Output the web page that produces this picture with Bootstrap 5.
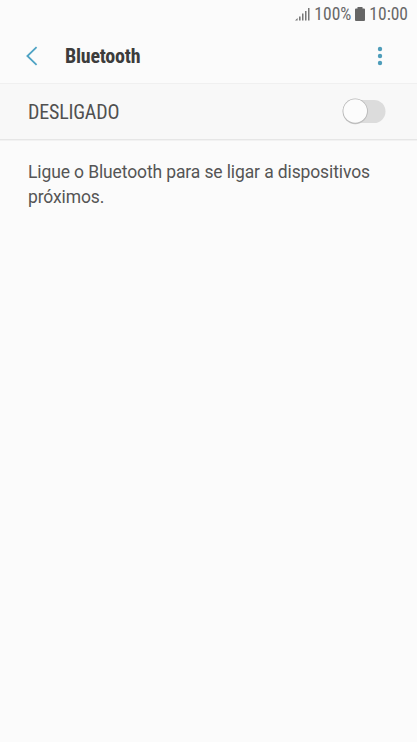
<!DOCTYPE html>
<html lang="pt">
<head>
<meta charset="utf-8">
<meta name="viewport" content="width=device-width, initial-scale=1">
<title>Bluetooth</title>
<link href="https://cdn.jsdelivr.net/npm/bootstrap@5.3.0/dist/css/bootstrap.min.css" rel="stylesheet">
<style>
body{background:#fbfbfb;font-family:Roboto,"Liberation Sans",sans-serif;color:#555;min-height:742px}
.cond{font-family:"Roboto Condensed",Roboto,sans-serif;font-stretch:75%}
.status-bar{height:28px;padding-right:9px;font-size:17.5px;line-height:28px;color:#686868}
.title-bar{height:56px;border-bottom:1px solid #f0f0f0;padding:0 33px 0 26px}
.screen-title{font-size:20px;line-height:24px;font-weight:700;letter-spacing:-.23px;color:#3c3c3c;margin-left:27px}
.switch-row{height:56px;background:#f8f8f8;border-bottom:1px solid #e6e6e6;box-shadow:0 1px 0 #f2f2f2;padding:0 30px 0 28px}
.switch-label{font-size:20px;line-height:24px;letter-spacing:-.2px;color:#505050;padding-top:1px}
.switch-control{margin-bottom:1px}
.hint{padding:20px 28px;font-size:17.5px;line-height:25px;letter-spacing:-.12px}
</style>
</head>
<body>
<div class="status-bar cond d-flex justify-content-end align-items-center">
  <svg width="15" height="15" viewBox="0 0 15 15" fill="#777" class="me-1"><path d="M0 13.5 2.6 11v2.5zM4 9.5h1.6v4H4zM7 6.5h1.5v7H7zM10 4h1.5v9.5H10zM13 1h1.5v12.5H13z"/></svg>
  <span>100%</span>
  <svg width="10" height="14" viewBox="0 0 10 14" fill="#666" class="mx-1"><path d="M2.5 0h5v1.5H9q1 0 1 1V13q0 1-1 1H1q-1 0-1-1V2.5q0-1 1-1h1.5z"/></svg>
  <span>10:00</span>
</div>
<header class="title-bar d-flex align-items-center">
  <svg width="12" height="20" viewBox="0 0 12 20" fill="none" stroke="#4fa3c4" stroke-width="1.8"><path d="M10.6 1.2 1.4 10l9.2 8.8"/></svg>
  <h1 class="screen-title cond mb-0"><span>Bluetooth</span></h1>
  <svg class="ms-auto" width="8" height="20" viewBox="0 0 8 20" fill="#4e9dba"><circle cx="4" cy="3" r="2.2"/><circle cx="4" cy="10" r="2.2"/><circle cx="4" cy="17" r="2.2"/></svg>
</header>
<div class="switch-row d-flex align-items-center justify-content-between">
  <span class="switch-label cond">DESLIGADO</span>
  <svg class="switch-control" width="46" height="30" viewBox="0 0 46 30"><rect x="4" y="4" width="40.5" height="23" rx="11.5" fill="#dcdcdc"/><circle cx="14.2" cy="15.6" r="12.6" fill="#c5c5c5"/><circle cx="14.2" cy="15" r="12.5" fill="#b8b8b8"/><circle cx="14.2" cy="15" r="11.8" fill="#fcfcfc"/></svg>
</div>
<main class="hint">Ligue o Bluetooth para se ligar a dispositivos próximos.</main>
<script src="https://cdn.jsdelivr.net/npm/bootstrap@5.3.0/dist/js/bootstrap.bundle.min.js"></script>
</body>
</html>
